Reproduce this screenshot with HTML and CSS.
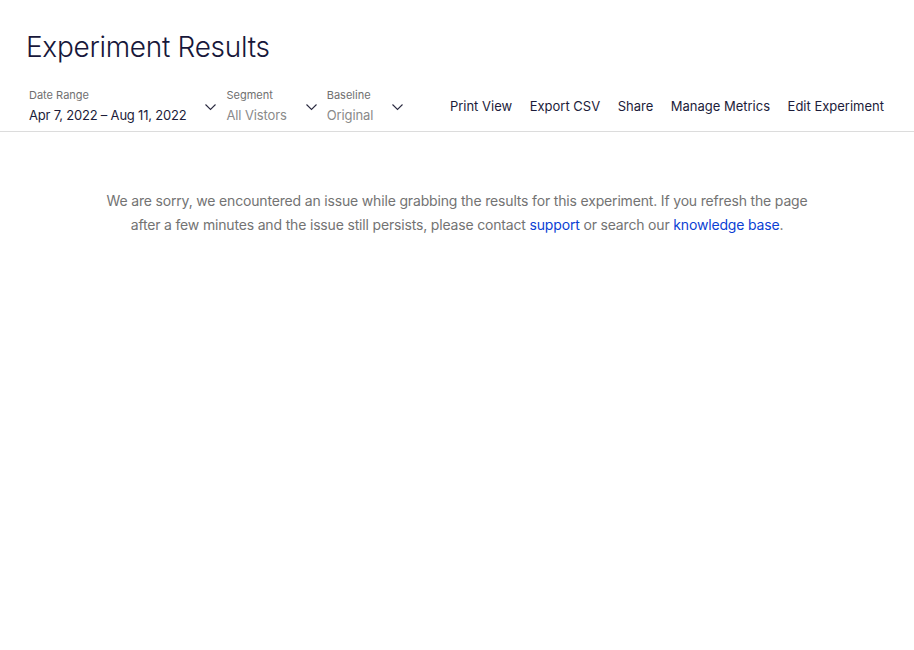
FILE: index.html
```html
<!DOCTYPE html>
<html lang="en">
<head>
    <meta charset="UTF-8">
    <meta name="viewport" content="width=device-width, initial-scale=1.0">
    <title>Experiment Results</title>
    <link rel="stylesheet" href="styles.css">
</head>
<body>
    <div class="page-header">
        <h1>Experiment Results</h1>

        <div class="toolbar">
            <div class="filters">
                <div class="filter">
                    <div class="filter-text">
                        <span class="filter-label">Date Range</span>
                        <span class="filter-value">Apr 7, 2022 – Aug 11, 2022</span>
                    </div>
                    <svg class="chevron" width="11" height="8" viewBox="0 0 11 8"><path d="M0.5 1.5 L5.5 6.5 L10.5 1.5" /></svg>
                </div>
                <div class="filter">
                    <div class="filter-text">
                        <span class="filter-label">Segment</span>
                        <span class="filter-value muted">All Vistors</span>
                    </div>
                    <svg class="chevron" width="11" height="8" viewBox="0 0 11 8"><path d="M0.5 1.5 L5.5 6.5 L10.5 1.5" /></svg>
                </div>
                <div class="filter">
                    <div class="filter-text">
                        <span class="filter-label">Baseline</span>
                        <span class="filter-value muted">Original</span>
                    </div>
                    <svg class="chevron" width="11" height="8" viewBox="0 0 11 8"><path d="M0.5 1.5 L5.5 6.5 L10.5 1.5" /></svg>
                </div>
            </div>

            <nav class="actions">
                <a href="#">Print View</a>
                <a href="#">Export CSV</a>
                <a href="#">Share</a>
                <a href="#">Manage Metrics</a>
                <a href="#">Edit Experiment</a>
            </nav>
        </div>
    </div>

    <div class="results">
        <p class="error-message">
            We are sorry, we encountered an issue while grabbing the results for this experiment. If you refresh the page
            after a few minutes and the issue still persists, please contact <a href="#">support</a> or search our <a href="#">knowledge base</a>.
        </p>
    </div>
</body>
</html>
```

FILE: styles.css
```css
body {
    margin: 0;
    font-family: Inter, "Noto Sans", Arial, sans-serif;
    background: #fff;
    color: #1c1c3a;
}
.page-header {
    border-bottom: 1px solid #dcdcdc;
}
h1 {
    margin: 0;
    padding: 29px 0 0 26px;
    font-size: 28px;
    font-weight: 300;
    line-height: 36px;
    letter-spacing: -0.3px;
    color: #17173a;
}
.toolbar {
    display: flex;
    align-items: center;
    justify-content: space-between;
    padding: 23px 30px 6px 29px;
}
.filters {
    display: flex;
    gap: 10px;
}
.filter {
    display: flex;
    align-items: center;
    gap: 19px;
}
.filter-text {
    display: flex;
    flex-direction: column;
    gap: 3px;
}
.filter-label {
    font-size: 11px;
    line-height: 14px;
    color: #707070;
}
.filter-value {
    font-size: 13px;
    line-height: 20px;
    letter-spacing: -0.12px;
    color: #1c1c3a;
}
.filter-value.muted {
    color: #8a8a8a;
}
.filter:first-child .filter-value {
    letter-spacing: -0.2px;
}
.chevron {
    fill: none;
    stroke: #2a2a40;
    stroke-width: 1.1;
    margin-top: 1px;
}
.actions {
    display: flex;
    gap: 17.5px;
    margin-bottom: 1px;
}
.actions a {
    font-size: 13px;
    color: #1c1c3a;
    text-decoration: none;
}
.results {
    padding: 57px 30px;
}
.error-message {
    margin: 0 auto;
    max-width: 720px;
    text-align: center;
    font-size: 14px;
    line-height: 24px;
    letter-spacing: -0.17px;
    color: #737373;
}
.error-message a {
    color: #0b3fd4;
    text-decoration: none;
}
```
